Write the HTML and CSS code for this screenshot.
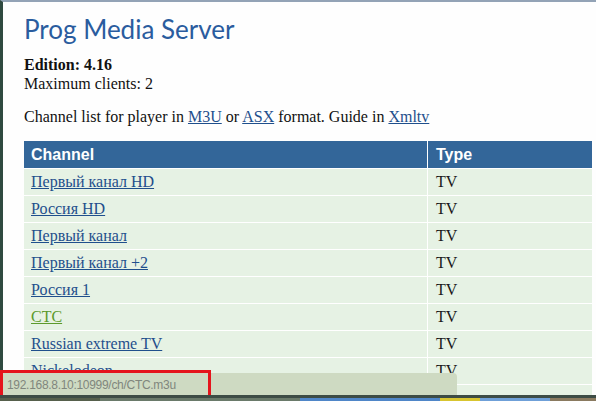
FILE: index.html
```html
<!DOCTYPE html>
<html>
<head>
<meta charset="utf-8">
<link rel="stylesheet" href="styles.css">
</head>
<body>
<div class="window">
  <div class="page">
    <h1 class="title">Prog Media Server</h1>
    <div class="info">
      <div class="edition">Edition: 4.16</div>
      <div>Maximum clients: 2</div>
    </div>
    <p class="lead">Channel list for player in <a href="#">M3U</a> or <a href="#">ASX</a> format. Guide in <a href="#">Xmltv</a></p>
    <table class="channels">
      <thead>
        <tr><th class="c-name">Channel</th><th class="c-type">Type</th></tr>
      </thead>
      <tbody>
        <tr><td class="c-name"><a href="#">Первый канал HD</a></td><td class="c-type">TV</td></tr>
        <tr><td class="c-name"><a href="#">Россия HD</a></td><td class="c-type">TV</td></tr>
        <tr><td class="c-name"><a href="#">Первый канал</a></td><td class="c-type">TV</td></tr>
        <tr><td class="c-name"><a href="#">Первый канал +2</a></td><td class="c-type">TV</td></tr>
        <tr><td class="c-name"><a href="#">Россия 1</a></td><td class="c-type">TV</td></tr>
        <tr><td class="c-name"><a href="#" class="hover">CTC</a></td><td class="c-type">TV</td></tr>
        <tr><td class="c-name"><a href="#">Russian extreme TV</a></td><td class="c-type">TV</td></tr>
        <tr><td class="c-name"><a href="#">Nickelodeon</a></td><td class="c-type">TV</td></tr>
        <tr><td class="c-name"></td><td class="c-type"></td></tr>
      </tbody>
    </table>
  </div>
</div>
<div class="statusbar">192.168.8.10:10999/ch/CTC.m3u</div>
<div class="highlight"></div>
<div class="taskbar">
  <span class="tb tb1"></span><span class="tb tb2"></span><span class="tb tb3"></span><span class="tb tb4"></span><span class="tb tb5"></span><span class="tb tb6"></span>
</div>
</body>
</html>
```
FILE: styles.css
```css
html, body {
  margin: 0;
  padding: 0;
  height: 100%;
  overflow: hidden;
  background: #ffffff;
}
.window {
  height: 100%;
  border-top: 2px solid #93a3b6;
  border-left: 3px solid #2f4a40;
  box-sizing: border-box;
  background: #fefefe;
}
.page {
  padding-left: 21px;
  padding-right: 4px;
}
.title {
  margin: 12px 0 11px 0;
  font-family: Lato, "Open Sans", sans-serif;
  font-weight: 400;
  font-size: 26px;
  line-height: 30px;
  color: #2a5c9e;
}
.info {
  font-family: "Liberation Serif", "Times New Roman", serif;
  font-size: 16px;
  line-height: 19px;
  color: #111;
}
.edition {
  font-weight: bold;
}
.lead {
  margin: 14px 0 15px 0;
  font-family: "Liberation Serif", "Times New Roman", serif;
  font-size: 16px;
  line-height: 19px;
  color: #111;
}
a {
  color: #1f4f8c;
  text-decoration: underline;
}
a.hover {
  color: #5c9a2c;
}
.channels {
  width: 568px;
  border-collapse: separate;
  border-spacing: 0;
}
.channels th {
  background: #336699;
  color: #ffffff;
  font-family: "Liberation Sans", Arial, sans-serif;
  font-weight: bold;
  font-size: 16px;
  line-height: 27px;
  padding: 0 0 0 7px;
  text-align: left;
  border-bottom: 1px solid #ffffff;
}
.channels td {
  background: #e6f2e4;
  font-family: "Liberation Serif", "Times New Roman", serif;
  font-size: 16px;
  line-height: 26px;
  height: 26px;
  padding: 0 0 0 7px;
  color: #1a1a1a;
  border-bottom: 1px solid #ffffff;
}
.channels .c-name {
  width: 396px;
}
.channels .c-type {
  border-left: 1px solid #ffffff;
  padding-left: 8px;
}
.statusbar {
  position: fixed;
  left: 0;
  top: 373px;
  width: 450px;
  height: 22px;
  padding-left: 7px;
  background: #cedac2;
  border-top-right-radius: 4px;
  font-family: "Liberation Sans", Arial, sans-serif;
  font-size: 12px;
  letter-spacing: -0.3px;
  line-height: 24px;
  color: #80867d;
}
.highlight {
  position: fixed;
  left: 0;
  top: 370px;
  width: 205px;
  height: 31px;
  border: 3px solid #e5141c;
  box-sizing: content-box;
}
.taskbar {
  position: fixed;
  left: 0;
  top: 395px;
  width: 596px;
  height: 6px;
  background: #3d4c45;
  display: flex;
  align-items: flex-end;
}
.tb {
  display: block;
  height: 3px;
}
.tb1 { width: 100px; background: #56604c; }
.tb2 { width: 200px; background: #6a7a6a; }
.tb3 { width: 140px; background: #4f86c8; }
.tb4 { width: 40px; background: #d8c530; }
.tb5 { width: 70px; background: #6fa0d8; }
.tb6 { width: 46px; background: #8a7a60; }
```
